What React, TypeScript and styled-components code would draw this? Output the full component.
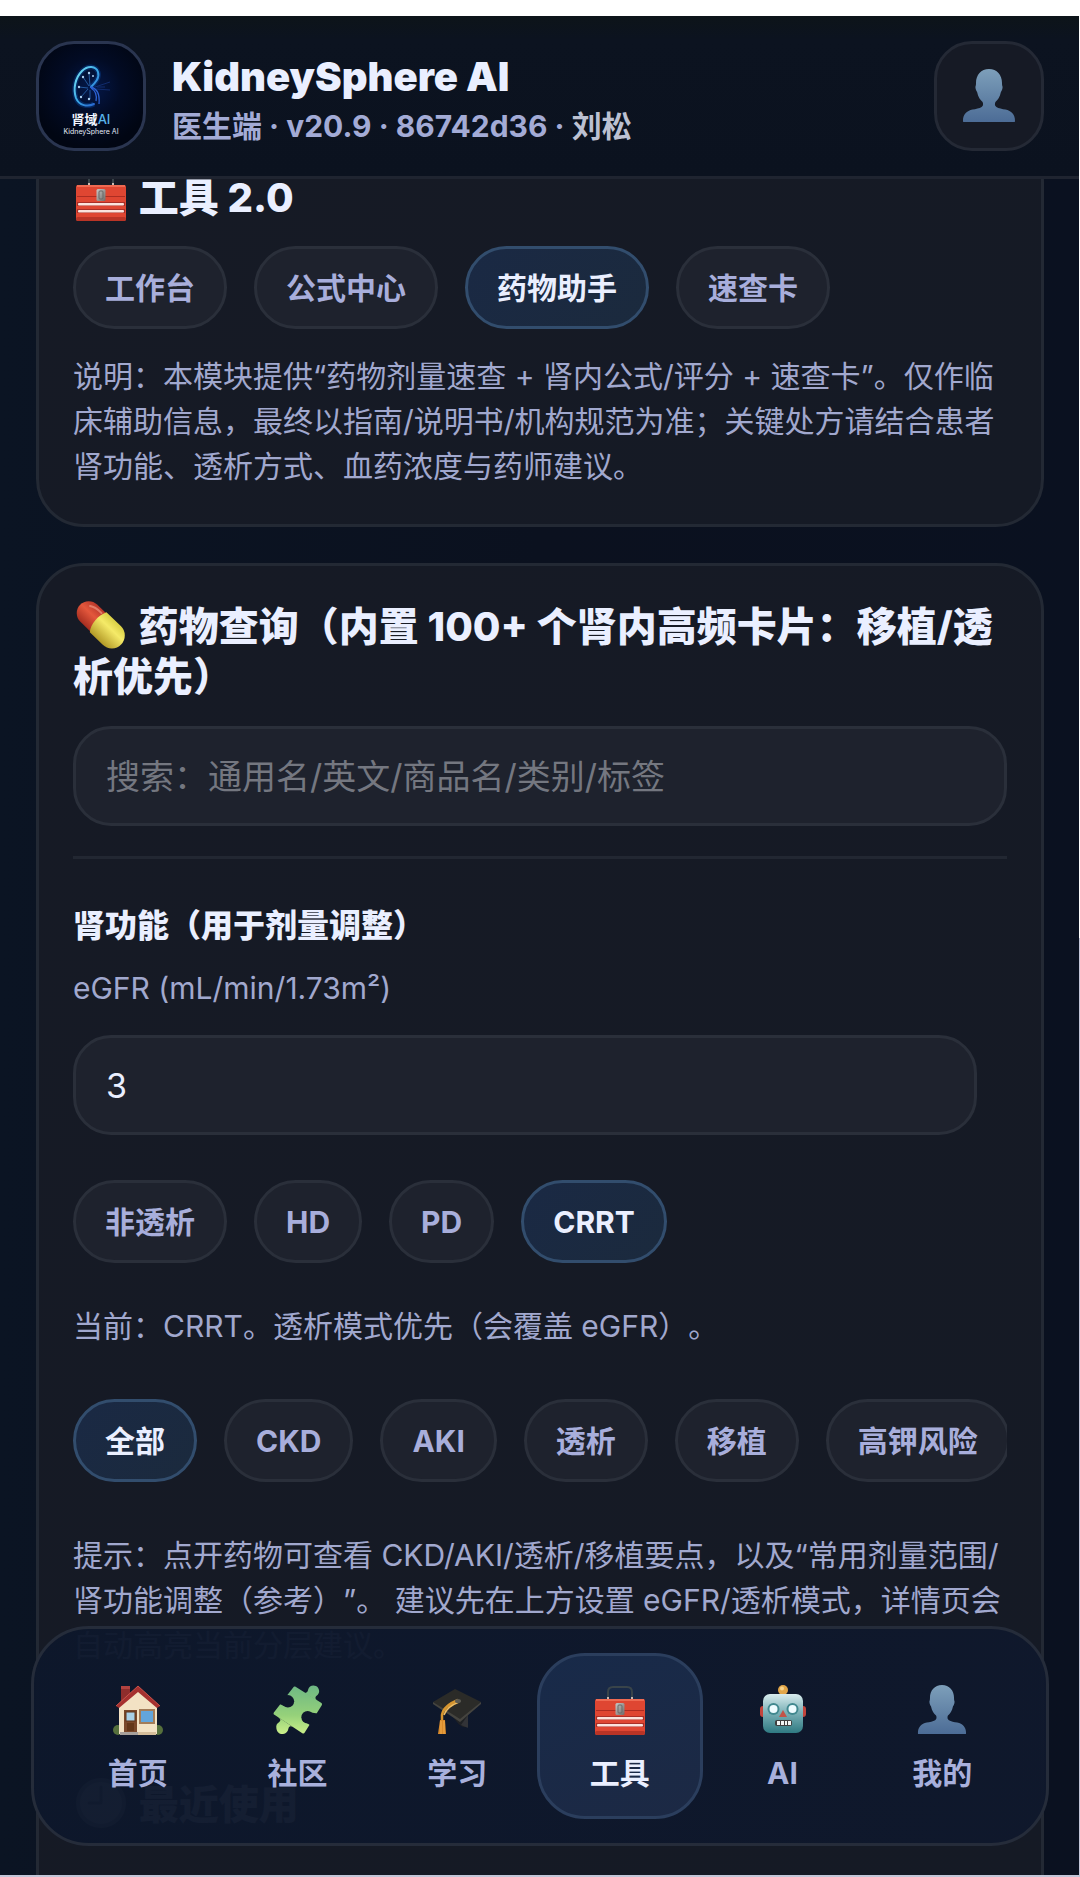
import React, { useLayoutEffect, useRef, useState } from 'react';
import styled, { createGlobalStyle, css } from 'styled-components';

const GlobalStyle = createGlobalStyle`
  * { box-sizing: border-box; }
  body {
    margin: 0;
    background: #ffffff;
    font-family: Inter, "Noto Sans CJK SC", sans-serif;
    text-spacing-trim: space-all;
  }
  button, input { font-family: inherit; }
`;

const Page = styled.div`
  height: 100vh;
  padding: 16px 1px 2px 0;
  background: linear-gradient(#ffffff 50%, #c3c6d8 50%);
`;

const Shell = styled.div`
  position: relative;
  display: flex;
  flex-direction: column;
  height: 100%;
  overflow: hidden;
  color: #eaefff;
  background: linear-gradient(90deg, #0b1423 0%, #0b111f 50%, #0a1120 100%);
`;

const Header = styled.header`
  display: flex;
  align-items: center;
  gap: 26px;
  padding: 25px 35px 25px 36px;
  border-bottom: 3px solid #1f2430;
  background: linear-gradient(#0d1419 0, #0c1320 24px, #0b121f 100%);
`;

const Logo = styled.div`
  display: flex;
  flex-direction: column;
  align-items: center;
  width: 110px;
  height: 110px;
  padding-top: 18px;
  border: 3px solid #2a3550;
  border-radius: 38px;
  background: radial-gradient(circle at 50% 42%, #04184a 0, #020b24 38%, #010613 75%);
`;

const LogoName = styled.div`
  margin-top: 3px;
  font-size: 13px;
  line-height: 16px;
  font-weight: 700;
  color: #f2f6ff;
  span { color: #58b4ea; font-weight: 500; }
`;

const LogoCaption = styled.div`
  font-size: 7px;
  line-height: 10px;
  color: #e4e9f5;
  white-space: nowrap;
`;

const Brand = styled.div`
  flex: 1;
  min-width: 0;
  padding-top: 10px;
`;

const BrandName = styled.h1`
  margin: 0;
  font-size: 40px;
  line-height: 50px;
  font-weight: 900;
`;

const BrandInfo = styled.div`
  font-size: 30px;
  line-height: 48px;
  font-weight: 700;
  color: #a3abd6;
  span { color: #bcc1d2; }
`;

const UserButton = styled.button`
  display: grid;
  place-items: center;
  width: 110px;
  height: 110px;
  padding: 0;
  border: 3px solid #242935;
  border-radius: 38px;
  background: #161a25;
`;

const Main = styled.main`
  flex: 1;
  min-height: 0;
  display: flex;
  flex-direction: column;
  gap: 36px;
  padding: 36px 35px 0 36px;
  overflow-y: auto;
  scrollbar-width: none;
`;

const Card = styled.section`
  flex: none;
  padding: 36px 34px 35px;
  border: 3px solid #232934;
  border-radius: 48px;
  background: linear-gradient(135deg, #161a25, #151a25);
`;

const CardTitle = styled.h2`
  margin: 0;
  font-size: 40px;
  line-height: 50px;
  font-weight: 800;
  svg { margin: -8px 4px -8px 3px; vertical-align: -1px; }
`;

const SubTitle = styled.h3`
  margin: 42px 0 0;
  font-size: 32px;
  line-height: 50px;
  font-weight: 800;
`;

const Chips = styled.div<{ $top: number }>`
  display: flex;
  gap: 27px;
  margin-top: ${p => p.$top}px;
  overflow: hidden;
`;

const Chip = styled.button<{ $active: boolean }>`
  flex: none;
  height: 83px;
  padding: 0 29px;
  border: 3px solid #2a2f3a;
  border-radius: 42px;
  background: #1e222d;
  color: #a8aedb;
  font-size: 30px;
  line-height: 44px;
  font-weight: 700;
  white-space: nowrap;
  ${p => p.$active && css`
    border-color: #324d6d;
    background: linear-gradient(135deg, #1a2944, #1b2a3d);
    color: #eaefff;
  `}
`;

const Note = styled.p<{ $top: number }>`
  margin: ${p => p.$top}px 0 0;
  font-size: 30px;
  line-height: 45px;
  color: #a1a8ce;
`;

const Label = styled.label`
  display: block;
  margin-top: 15px;
  font-size: 30px;
  line-height: 45px;
  color: #a1a8ce;
`;

const Field = styled.input`
  display: block;
  width: 100%;
  height: 100px;
  margin-top: 24px;
  padding: 0 30px;
  border: 3px solid #2a2f3a;
  border-radius: 38px;
  outline: none;
  background: #1e222d;
  color: #eaefff;
  font-size: 34px;
  &::placeholder { color: #747780; opacity: 1; }
`;

const NumberRow = styled.div`
  padding-right: 30px;
`;

const Divider = styled.hr`
  height: 3px;
  margin: 30px 0 0;
  border: 0;
  background: #222732;
`;

const Recent = styled.div`
  min-height: 180px;
  margin-top: 112px;
`;

const TabBar = styled.nav`
  position: absolute;
  left: 31px;
  right: 30px;
  bottom: 29px;
  display: flex;
  padding: 24px;
  border: 3px solid #252c3a;
  border-radius: 58px;
  background: linear-gradient(90deg, rgba(13, 23, 43, 0.97), rgba(15, 24, 44, 0.97));
`;

const Tab = styled.button<{ $active: boolean }>`
  flex: 1;
  display: flex;
  flex-direction: column;
  align-items: center;
  gap: 16px;
  height: 166px;
  padding: 32px 0 0;
  border: 0;
  border-radius: 48px;
  background: none;
  color: #a8b0dc;
  font-size: 30px;
  line-height: 44px;
  font-weight: 700;
  ${p => p.$active && css`
    padding-top: 29px;
    border: 3px solid #2b3e5d;
    background: linear-gradient(160deg, #182a49, #1c2944);
    color: #eaefff;
  `}
`;

function KidneyMark() {
  return (
    <svg width="46" height="46" viewBox="0 0 46 46" fill="none" aria-hidden="true">
      <defs>
        <linearGradient id="kidney" x1="0" y1="0" x2="1" y2="1">
          <stop offset="0" stopColor="#7fe6f2" />
          <stop offset="0.5" stopColor="#39a7e6" />
          <stop offset="1" stopColor="#2456c8" />
        </linearGradient>
      </defs>
      <path d="M23 25c4-4 9-9 7-15C28 4 20 3 14 9 7 16 5 27 8 36c3 8 12 9 18 6" stroke="#0a4fb0" strokeWidth="5" opacity=".35" />
      <path d="M23 25c4-4 9-9 7-15C28 4 20 3 14 9 7 16 5 27 8 36c3 8 12 9 18 6" stroke="url(#kidney)" strokeWidth="2" strokeLinecap="round" />
      <path d="M22 25c7 1 10 6 9 17M23 26c5 3 6 8 5 13" stroke="#2c62d4" strokeWidth="1.3" />
      <path d="M22 24l-1-13M21 24l-6-9M20 26l-9-1M20 27l-7 8M22 28v9" stroke="#2f74c4" strokeWidth=".7" />
      <path d="M27 25l15-5M28 27l14 1M29 25h8" stroke="#1b3d8f" strokeWidth=".6" />
      <g fill="#a9cdf0">
        <circle cx="21" cy="11" r="1.2" /><circle cx="15" cy="15" r="1.2" /><circle cx="25" cy="14" r="1" />
        <circle cx="11" cy="25" r="1.2" /><circle cx="13" cy="35" r="1.2" /><circle cx="21" cy="37" r="1.2" />
      </g>
    </svg>
  );
}

function UserIcon({ size = 54 }: { size?: number }) {
  return (
    <svg width={size} height={size} viewBox="0 0 54 54" aria-hidden="true">
      <defs>
        <linearGradient id="bust" x1="0" y1="0" x2="0" y2="1">
          <stop offset="0" stopColor="#7d9fba" />
          <stop offset="1" stopColor="#4c6c96" />
        </linearGradient>
      </defs>
      <path fill="url(#bust)" d="M27 0c8 0 13 6 13 14 0 1 0 2 .6 4-.2 3-1.2 4-1.7 5-1 5-3.200 8-5.500 10-.9 2-.6 4 1 5 2 1.400 6 2 9 2.600 6 1.200 9.600 5 9.600 11.400 0 1-.5 1-1.400 1H2.400C1.400 53 1 53 1 52c0-6.400 3.600-10.200 9.600-11.400 3-.6 7-1.200 9-2.600 1.600-1 1.900-3 1-5-2.300-2-4.500-5-5.500-10-.5-1-1.500-2-1.700-5 .6-2 .6-3 .6-4C14 6 19 0 27 0z" />
    </svg>
  );
}

function ToolboxIcon({ size = 50 }: { size?: number }) {
  return (
    <svg width={size} height={size} viewBox="0 0 50 50" aria-hidden="true">
      <defs>
        <linearGradient id="latch" x1="0" y1="0" x2="1" y2="1">
          <stop offset="0" stopColor="#c9c9c7" />
          <stop offset="1" stopColor="#6d6a69" />
        </linearGradient>
      </defs>
      <path d="M13 13V7c0-3 2-5 5-5h14c3 0 5 2 5 5v6" fill="none" stroke="#39444a" strokeWidth="2" />
      <path d="M12 12h2v3h-2zM36 12h2v3h-2z" fill="#cdb9b0" />
      <rect x="0" y="14" width="50" height="36" rx="2" fill="#df4632" />
      <rect x="1" y="14" width="48" height="2" fill="#ef6a52" />
      <path d="M1 25.500h48" stroke="#ac2d22" />
      <rect x="1" y="31" width="48" height="4" fill="#a92f27" />
      <rect x="1" y="38" width="48" height="4" fill="#a92f27" />
      <rect x="2" y="32" width="46" height="2.500" rx="1" fill="#fbe3dd" />
      <rect x="2" y="39" width="46" height="2.500" rx="1" fill="#fbe3dd" />
      <rect x="0" y="46" width="50" height="4" rx="2" fill="#b93426" />
      <rect x="20.500" y="18" width="9" height="12" rx="1.500" fill="url(#latch)" />
      <rect x="23" y="20" width="4" height="8" rx="1" fill="none" stroke="#6a6867" />
    </svg>
  );
}

function PillIcon() {
  return (
    <svg width="50" height="50" viewBox="0 0 50 50" aria-hidden="true">
      <defs>
        <linearGradient id="pillRed" x1="0" y1="0" x2="0" y2="1">
          <stop offset="0" stopColor="#b8372a" />
          <stop offset="0.450" stopColor="#e4573c" />
          <stop offset="1" stopColor="#a62e20" />
        </linearGradient>
        <linearGradient id="pillYellow" x1="0" y1="0" x2="0" y2="1">
          <stop offset="0" stopColor="#d9cf45" />
          <stop offset="0.350" stopColor="#f5ea68" />
          <stop offset="1" stopColor="#b39a27" />
        </linearGradient>
      </defs>
      <g transform="rotate(44 25 25)">
        <path d="M25 13H8a12 12 0 0 0 0 24h17z" fill="url(#pillRed)" />
        <path d="M20 12h20a13 13 0 0 1 0 26H22c-5-6-6-18-2-26z" fill="url(#pillYellow)" />
        <path d="M4 19c4-3 8-3 13-3" stroke="#f3a48f" strokeWidth="2" fill="none" opacity=".6" strokeLinecap="round" />
      </g>
    </svg>
  );
}

function ClockIcon() {
  return (
    <svg width="50" height="50" viewBox="0 0 50 50" aria-hidden="true">
      <circle cx="25" cy="25" r="23" fill="#dfe3ea" stroke="#8f949c" strokeWidth="4" />
      <path d="M25 25V9M25 25H13" stroke="#7b808a" strokeWidth="3" strokeLinecap="round" />
    </svg>
  );
}

function HomeIcon() {
  return (
    <svg width="50" height="50" viewBox="0 0 50 50" aria-hidden="true">
      <ellipse cx="5" cy="45" rx="5" ry="5" fill="#56703c" />
      <ellipse cx="45" cy="45" rx="5" ry="5" fill="#56703c" />
      <path d="M8 2h9v10l-9 8z" fill="#8f2d2c" />
      <path d="M8 1h9v3H8z" fill="#b24340" />
      <path d="M6 20L25 4l19 16v29H6z" fill="#f3e2c4" />
      <path d="M3 21L25 1l22 20-3 2L25 7 6 23z" fill="#a5302f" />
      <path d="M3 21L25 1l22 20" fill="none" stroke="#c9534a" />
      <rect x="11" y="25" width="13" height="23" fill="#7a482a" />
      <rect x="13" y="27" width="9" height="9" fill="#a8cfe6" stroke="#5c341d" />
      <rect x="14" y="38" width="7" height="8" fill="#643719" />
      <rect x="27" y="25" width="14" height="13" fill="#63a5db" stroke="#a37c58" strokeWidth="2" />
      <rect x="7" y="47" width="18" height="3" fill="#a7a19b" />
      <rect x="25" y="47" width="18" height="3" fill="#d5bd9a" />
    </svg>
  );
}

function PuzzleIcon() {
  return (
    <svg width="50" height="50" viewBox="0 0 52 52" aria-hidden="true">
      <defs>
        <linearGradient id="puzzle" gradientUnits="userSpaceOnUse" x1="0" y1="0" x2="0" y2="52">
          <stop offset="0" stopColor="#6db784" />
          <stop offset="0.600" stopColor="#95d17a" />
          <stop offset="1" stopColor="#cdf08a" />
        </linearGradient>
        <mask id="puzzleHoles">
          <rect width="52" height="52" fill="#fff" />
          <circle cx="15.500" cy="17" r="6.500" fill="#000" />
          <path d="M9 8l7 4-4 10-7-3z" fill="#000" />
          <circle cx="36" cy="33.500" r="6.500" fill="#000" />
          <path d="M36 28l12 2-9 12-6-4z" fill="#000" />
        </mask>
      </defs>
      <g fill="url(#puzzle)">
        <path mask="url(#puzzleHoles)" d="M21 2.500c.6-1 1.500-1.200 2.500-.6L50 18.500c1 .6 1.300 1.500.7 2.500L33 49.500c-.6 1-1.500 1.200-2.500.6L1.500 31c-1-.6-1.200-1.500-.6-2.500z" />
        <path d="M32 8c3 1 4-1 4.500-3 .5-3 3-4.500 5.500-4.500 4 0 6 3 6 6 0 2-1 3.500-3 5-1.500 1.500-1 3 1 5z" />
        <path d="M5 33c3 2 3.500 4 1.500 5.500-2.500 1.500-3.500 3.500-3 6.500.5 4 3.500 6.500 7 6 3-.4 5-2.500 5.500-5.500.5-2.500 2-3.500 5-1.500z" />
      </g>
    </svg>
  );
}

function CapIcon() {
  return (
    <svg width="50" height="50" viewBox="0 0 50 50" aria-hidden="true">
      <path d="M14 24l22 6v12c-5 1-8-1-11-5z" fill="#1f2124" />
      <path d="M36 30v13l-7-3z" fill="#45464a" opacity=".5" />
      <path d="M1 17L23 4l26 13-21 19z" fill="#2b2b28" />
      <path d="M1 17l27 17 21-17v2L28 37 1 19z" fill="#45443f" />
      <path d="M26 15C17 19 11 23 10 30v10" fill="none" stroke="#d6952f" strokeWidth="2.500" />
      <path d="M27 17c-8 3-13 7-15 13" fill="none" stroke="#f0bd62" strokeWidth="1.500" />
      <ellipse cx="26" cy="16" rx="3" ry="2" fill="#5b5a52" />
      <path d="M8 35h5l1 14H6z" fill="#d88a2b" />
      <path d="M9 36v13M12 36v13" stroke="#f0ac4c" />
    </svg>
  );
}

function RobotIcon() {
  return (
    <svg width="50" height="50" viewBox="0 0 50 50" aria-hidden="true">
      <defs>
        <linearGradient id="robot" x1="0" y1="0" x2="0" y2="1">
          <stop offset="0" stopColor="#d9ecee" />
          <stop offset="0.450" stopColor="#7fb3b9" />
          <stop offset="1" stopColor="#2f7a82" />
        </linearGradient>
      </defs>
      <rect x="2" y="21" width="6" height="11" rx="3" fill="#c2453c" />
      <rect x="42" y="21" width="6" height="11" rx="3" fill="#c2453c" />
      <path d="M20 9h10v4H20z" fill="#7e6a50" />
      <circle cx="25" cy="5" r="5" fill="#e2a649" />
      <circle cx="24" cy="3.500" r="2" fill="#f7d48b" />
      <rect x="5" y="9" width="40" height="39" rx="7" fill="url(#robot)" />
      <circle cx="15.500" cy="24" r="6" fill="#41888f" />
      <circle cx="34.500" cy="24" r="6" fill="#41888f" />
      <circle cx="15.500" cy="24" r="4" fill="#effcff" />
      <circle cx="34.500" cy="24" r="4" fill="#effcff" />
      <path d="M25 25l4 7h-8z" fill="#c35348" />
      <rect x="17" y="35" width="17" height="6" rx="2" fill="#40403f" />
      <path d="M19 36h3v4h-3zM23 36h3v4h-3zM27 36h2v4h-2zM30 36h3v4h-3z" fill="#f3f5f4" />
    </svg>
  );
}

const sections = ['工作台', '公式中心', '药物助手', '速查卡'];
const modes = ['非透析', 'HD', 'PD', 'CRRT'];
const tags = ['全部', 'CKD', 'AKI', '透析', '移植', '高钾风险'];
const tabs = [
  { name: '首页', icon: <HomeIcon /> },
  { name: '社区', icon: <PuzzleIcon /> },
  { name: '学习', icon: <CapIcon /> },
  { name: '工具', icon: <ToolboxIcon /> },
  { name: 'AI', icon: <RobotIcon /> },
  { name: '我的', icon: <UserIcon size={50} /> },
];

function ChipGroup({ items, initial, top }: { items: string[]; initial: string; top: number }) {
  const [selected, setSelected] = useState(initial);
  return (
    <Chips $top={top}>
      {items.map(item => (
        <Chip key={item} type="button" $active={item === selected} aria-pressed={item === selected} onClick={() => setSelected(item)}>
          {item}
        </Chip>
      ))}
    </Chips>
  );
}

export default function App() {
  const mainRef = useRef<HTMLElement>(null);
  const [query, setQuery] = useState('');
  const [egfr, setEgfr] = useState('3');
  const [tab, setTab] = useState('工具');

  useLayoutEffect(() => {
    if (mainRef.current) mainRef.current.scrollTop = 81;
  }, []);

  return (
    <Page>
      <GlobalStyle />
      <Shell>
        <Header>
          <Logo>
            <KidneyMark />
            <LogoName>肾域<span>AI</span></LogoName>
            <LogoCaption>KidneySphere AI</LogoCaption>
          </Logo>
          <Brand>
            <BrandName>KidneySphere AI</BrandName>
            <BrandInfo>医生端 · v20.9 · 86742d36 · <span>刘松</span></BrandInfo>
          </Brand>
          <UserButton type="button" aria-label="我的">
            <UserIcon />
          </UserButton>
        </Header>

        <Main ref={mainRef}>
          <Card>
            <CardTitle><ToolboxIcon /> 工具 2.0</CardTitle>
            <ChipGroup items={sections} initial="药物助手" top={23} />
            <Note $top={25}>
              说明：本模块提供“药物剂量速查 + 肾内公式/评分 + 速查卡”。仅作临床辅助信息，最终以指南/说明书/机构规范为准；关键处方请结合患者肾功能、透析方式、血药浓度与药师建议。
            </Note>
          </Card>

          <Card>
            <CardTitle><PillIcon /> 药物查询（内置 100+ 个肾内高频卡片：移植/透析优先）</CardTitle>
            <Field
              type="search"
              aria-label="搜索"
              placeholder="搜索：通用名/英文/商品名/类别/标签"
              value={query}
              onChange={e => setQuery(e.target.value)}
            />
            <Divider />
            <SubTitle>肾功能（用于剂量调整）</SubTitle>
            <Label htmlFor="egfr">eGFR (mL/min/1.73m²)</Label>
            <NumberRow>
              <Field id="egfr" inputMode="decimal" value={egfr} onChange={e => setEgfr(e.target.value)} />
            </NumberRow>
            <ChipGroup items={modes} initial="CRRT" top={45} />
            <Note $top={41}>当前：CRRT。透析模式优先（会覆盖 eGFR）。</Note>
            <ChipGroup items={tags} initial="全部" top={50} />
            <Note $top={51}>
              提示：点开药物可查看 CKD/AKI/透析/移植要点，以及“常用剂量范围/肾功能调整（参考）”。 建议先在上方设置 eGFR/透析模式，详情页会自动高亮当前分层建议。
            </Note>
            <Recent>
              <CardTitle><ClockIcon /> 最近使用</CardTitle>
            </Recent>
          </Card>
        </Main>

        <TabBar>
          {tabs.map(({ name, icon }) => (
            <Tab key={name} type="button" $active={name === tab} onClick={() => setTab(name)}>
              {icon}
              <span>{name}</span>
            </Tab>
          ))}
        </TabBar>
      </Shell>
    </Page>
  );
}
